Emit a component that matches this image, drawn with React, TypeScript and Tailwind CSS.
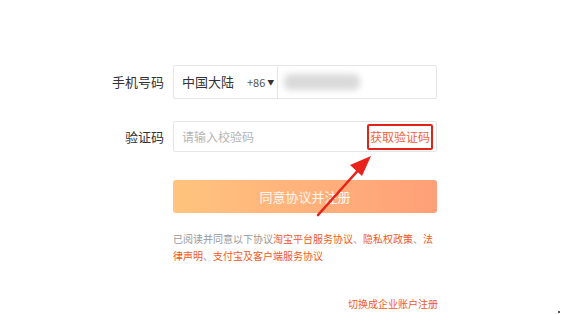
import React from "react";

const font = { fontFamily: '"Noto Sans CJK SC", "Noto Sans", sans-serif' };

function Arrow() {
  // 标注箭头，指向“获取验证码”
  return (
    <svg className="absolute left-0 top-0 pointer-events-none" width="561" height="314">
      <line x1="318" y1="215" x2="362" y2="166" stroke="#e8231b" strokeWidth="2.6" strokeLinecap="round" />
      <polygon points="371,156 350,165 362,176" fill="#e8231b" />
    </svg>
  );
}

export default function App() {
  return (
    <div className="relative w-[561px] h-[314px] bg-white overflow-hidden" style={font}>
      <div className="flex flex-col pt-[65px] pl-[111px]">
        <div className="flex items-center">
          <div className="w-[53px] text-right text-[13px] text-[#333]">手机号码</div>
          <div className="ml-[9px] w-[264px] h-[34px] border border-[#e5e5e5] rounded-[2px] flex items-center">
            <div className="w-[104px] h-full flex items-center pl-[8px] border-r border-[#e5e5e5]">
              <span className="text-[13px] text-[#333]">中国大陆</span>
              <span className="ml-[13px] text-[11px] text-[#555]">+86</span>
              <span className="ml-[2px] text-[7px] text-[#333]">▼</span>
            </div>
            <div className="ml-[6px] w-[76px] h-[16px] bg-[#dadada] rounded-[6px] blur-[3px]"></div>
          </div>
        </div>

        <div className="flex items-center mt-[22px]">
          <div className="w-[53px] text-right text-[13px] text-[#333]">验证码</div>
          <div className="ml-[9px] w-[264px] h-[31px] border border-[#e5e5e5] rounded-[2px] flex items-center justify-between pl-[8px] pr-[3px]">
            <span className="text-[12px] text-[#b5b5b5]">请输入校验码</span>
            <span className="h-[26px] px-[1px] flex items-center border-2 border-[#e0241c] rounded-[2px] text-[12px] text-[#f0643a]">
              获取验证码
            </span>
          </div>
        </div>

        <div className="ml-[62px] mt-[28px] w-[264px] h-[33px] rounded-[3px] bg-gradient-to-r from-[#ffc47e] to-[#ff9f78] flex items-center justify-center text-[13px] text-white/90">
          同意协议并注册
        </div>

        <p className="ml-[62px] mt-[17px] w-[266px] text-[10px] leading-[17px] text-[#999]">
          已阅读并同意以下协议
          <span className="text-[#f05a22]">淘宝平台服务协议</span>、
          <span className="text-[#f05a22]">隐私权政策</span>、
          <span className="text-[#f05a22]">法律声明</span>、
          <span className="text-[#f05a22]">支付宝及客户端服务协议</span>
        </p>

        <div className="ml-[62px] mt-[33px] w-[265px] text-right text-[10px] leading-[14px] text-[#f05a22]">切换成企业账户注册</div>
      </div>
      <div className="absolute right-[1px] bottom-[1px] w-[2px] h-[2px] bg-[#555]"></div>
      <Arrow />
    </div>
  );
}
